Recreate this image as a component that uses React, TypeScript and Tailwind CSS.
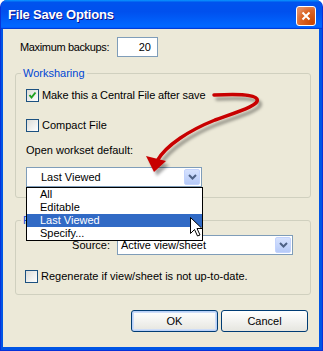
import React from 'react';

const Check = ({ checked = false }: { checked?: boolean }) => (
  <span className="w-[13px] h-[13px] shrink-0 border border-[#1C5180] bg-gradient-to-br from-[#DCDCD7] to-white flex items-center justify-center">
    {checked && (
      <svg width="11" height="11" viewBox="0 0 11 11">
        <path d="M2.5 5 L4.5 7.5 L8.5 2.5" fill="none" stroke="#21A121" strokeWidth="2" />
      </svg>
    )}
  </span>
);

const ComboButton = () => (
  <span className="ml-auto mr-[1px] w-[16px] h-[16px] rounded-[2px] border border-[#C3D3FD] bg-gradient-to-b from-[#D6E2FE] to-[#B6CAF8] flex items-center justify-center">
    <svg width="9" height="6" viewBox="0 0 9 6">
      <path d="M1 1 L4.5 4.5 L8 1" fill="none" stroke="#4D6185" strokeWidth="2" />
    </svg>
  </span>
);

const options = ['All', 'Editable', 'Last Viewed', 'Specify...'];

export default function App() {
  return (
    <div className="w-[323px] h-[351px] bg-white font-['Liberation_Sans',Arial,sans-serif] text-[11px] leading-[13px] text-black">
      <div className="w-[323px] h-[351px] flex flex-col rounded-t-[7px] overflow-hidden bg-[#0055E5] border-l border-r border-b border-[#0831D9]">
        {/* title bar */}
        <div className="h-[29px] shrink-0 flex items-center pl-[7px] pr-[6px] bg-[linear-gradient(180deg,#0997ff,#0053ee_8%,#0050ee_40%,#0066ff_88%,#0066ff_93%,#005bff_95%,#003dd7_96%,#003dd7)]">
          <span className="text-white font-bold text-[13px] leading-[16px] tracking-[-0.2px] [text-shadow:1px_1px_#0F1089] mt-[1px]">
            File Save Options
          </span>
          <span className="ml-auto mt-[3px] w-[20px] h-[20px] rounded-[3px] border border-white bg-[radial-gradient(circle_at_85%_85%,#cc4600_0,#dc6527_55%,#e28a5f_80%)] flex items-center justify-center">
            <svg width="10" height="10" viewBox="0 0 10 10">
              <path d="M1.5 1.5 L8.5 8.5 M8.5 1.5 L1.5 8.5" stroke="white" strokeWidth="2" />
            </svg>
          </span>
        </div>

        {/* client area */}
        <div className="relative flex-1 ml-[2px] mr-[3px] mb-[3px] bg-[#ECE9D8] flex flex-col">
          <div className="mt-[8px] h-[20px] flex items-center">
            <span className="ml-[17px] w-[97px] tracking-[-0.35px]">Maximum backups:</span>
            <span className="w-[41px] h-[20px] border border-[#7F9DB9] bg-white flex items-center justify-end pr-[6px]">20</span>
          </div>

          {/* Worksharing */}
          <div className="relative mt-[16px] ml-[12px] w-[296px] h-[125px] border border-[#D0D0BF] rounded-[3px] pt-[15px] pl-[10px] flex flex-col">
            <span className="absolute -top-[7px] left-[5px] px-[2px] bg-[#ECE9D8] text-[#0046D5]">Worksharing</span>
            <div className="h-[13px] flex items-center gap-[3px]">
              <Check checked />
              <span className="tracking-[-0.1px]">Make this a Central File after save</span>
            </div>
            <div className="mt-[17px] h-[13px] flex items-center gap-[3px]">
              <Check />
              <span>Compact File</span>
            </div>
            <div className="mt-[12px] h-[13px]">Open workset default:</div>
            <div className="relative mt-[10px] w-[176px] h-[20px] border border-[#7F9DB9] bg-white flex items-center">
              <span className="pl-[14px]">Last Viewed</span>
              <ComboButton />
              <div className="absolute z-10 top-[19px] -left-[1px] w-[177px] border border-black bg-white flex flex-col">
                {options.map((o) => (
                  <div
                    key={o}
                    className={
                      o === 'Last Viewed'
                        ? 'h-[13px] pl-[13px] bg-[#316AC5] text-white'
                        : 'h-[13px] pl-[13px]'
                    }
                  >
                    {o}
                  </div>
                ))}
              </div>
            </div>
          </div>

          {/* Preview */}
          <div className="relative mt-[22px] ml-[12px] w-[296px] h-[75px] border border-[#D0D0BF] rounded-[3px] pt-[14px] flex flex-col">
            <span className="absolute -top-[7px] left-[5px] px-[2px] bg-[#ECE9D8] text-[#0046D5]">Preview</span>
            <div className="h-[20px] flex items-center">
              <span className="w-[94px] text-right">Source:</span>
              <div className="ml-[7px] w-[176px] h-[20px] border border-[#7F9DB9] bg-white flex items-center">
                <span className="pl-[3px]">Active view/sheet</span>
                <ComboButton />
              </div>
            </div>
            <div className="mt-[15px] ml-[9px] h-[13px] flex items-center gap-[3px]">
              <Check />
              <span>Regenerate if view/sheet is not up-to-date.</span>
            </div>
          </div>

          <div className="mt-[15px] flex justify-end gap-[3px] pr-[11px]">
            <button className="w-[87px] h-[22px] rounded-[3px] border border-[#003C74] bg-gradient-to-b from-white to-[#E6E6E0] shadow-[inset_0_0_0_1px_#B8D0F8,inset_0_0_0_2px_#CEDDF8]">
              OK
            </button>
            <button className="w-[87px] h-[22px] rounded-[3px] border border-[#003C74] bg-gradient-to-b from-white to-[#E6E6E0]">
              Cancel
            </button>
          </div>

          {/* annotation arrow */}
          <svg className="absolute left-0 top-0 z-20 pointer-events-none" width="316" height="318" viewBox="3 29 316 318">
            <defs>
              <filter id="sh" x="-20%" y="-20%" width="140%" height="140%">
                <feDropShadow dx="3" dy="4" stdDeviation="1.6" floodColor="#000" floodOpacity="0.35" />
              </filter>
            </defs>
            <g filter="url(#sh)">
              <path
                d="M214 95 C235 94 254 94 257 99 C260 105 240 111 215 120 C190 130 166 145 157 161"
                fill="none"
                stroke="#C80000"
                strokeWidth="3.5"
                strokeLinecap="round"
              />
              <polygon points="146,156 166,161 154,172" fill="#C80000" />
            </g>
          </svg>

          {/* mouse cursor */}
          <svg className="absolute left-[187px] top-[188px] z-30 pointer-events-none" width="14" height="21" viewBox="0 0 14 21">
            <path
              d="M0.5 0.5 L0.5 16.5 L4.5 12.5 L7.5 19 L10 18 L7 11.5 L12 11.5 Z"
              fill="white"
              stroke="black"
              strokeWidth="1"
              strokeLinejoin="miter"
            />
          </svg>
        </div>
      </div>
    </div>
  );
}
